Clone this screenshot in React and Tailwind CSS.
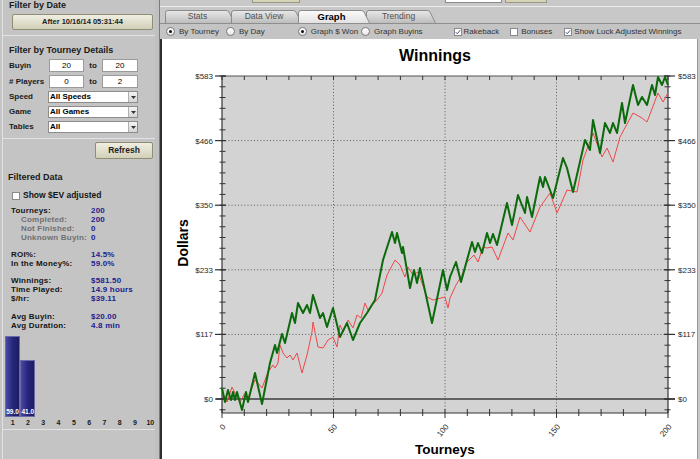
import React from "react";

const SF = "'Liberation Sans', Arial, sans-serif";

const green = [[222,388],[225,402],[228,390],[231,400],[233,392],[235,400],[237,392],[242,410],[246,392],[248,402],[255,373],[262,404],[270,363],[275,345],[277,353],[282,334],[285,343],[292,313],[295,323],[298,303],[303,313],[307,305],[310,313],[313,295],[320,318],[323,313],[327,327],[333,308],[340,337],[347,323],[353,340],[360,323],[367,313],[375,300],[383,260],[392,232],[395,243],[397,233],[402,253],[403,247],[410,288],[414,270],[417,283],[420,268],[432,323],[443,270],[447,290],[450,277],[456,262],[461,282],[467,260],[472,242],[475,252],[478,243],[482,253],[487,233],[490,243],[493,234],[497,245],[507,203],[512,225],[518,195],[525,213],[527,197],[532,217],[540,177],[543,187],[545,177],[553,198],[563,158],[567,168],[573,192],[585,140],[590,150],[593,120],[600,153],[605,123],[610,133],[613,123],[617,133],[622,103],[625,123],[633,85],[638,105],[642,97],[647,105],[652,85],[655,95],[658,77],[662,85],[665,77],[668,85]];

const red = [[222,392],[227,402],[232,387],[235,393],[240,402],[245,393],[248,398],[255,380],[258,383],[262,388],[268,372],[273,365],[275,368],[278,363],[280,345],[283,353],[287,358],[290,355],[293,360],[297,353],[302,373],[307,355],[312,332],[313,322],[318,347],[323,348],[328,340],[333,337],[337,347],[340,325],[343,332],[348,320],[353,328],[357,315],[361,318],[365,303],[368,310],[372,305],[377,300],[382,293],[387,275],[395,260],[400,265],[405,277],[408,267],[413,275],[418,272],[427,297],[433,300],[445,297],[448,308],[450,298],[456,285],[462,275],[467,262],[474,255],[478,262],[483,247],[487,248],[492,247],[498,260],[508,233],[513,240],[520,217],[530,232],[540,207],[550,193],[557,213],[567,190],[577,192],[583,160],[593,133],[602,157],[607,148],[613,162],[620,137],[633,113],[642,118],[647,122],[658,93],[663,102],[668,93]];

const pts = (a) => a.map((p) => p.join(",")).join(" ");

const majorsY = [76, 140.6, 205.2, 269.8, 334.4, 399];
const yLabels = ["$583", "$466", "$350", "$233", "$117", "$0"];
const minorY = [];
for (let i = 0; i < 32; i++) minorY.push(76 + i * 10.767);
const xTicks = [];
for (let i = 0; i <= 20; i++) xTicks.push(222 + i * 22.3);
const xLabels = [
  [222, "0"],
  [333.5, "50"],
  [445, "100"],
  [556.5, "150"],
  [668, "200"],
];

function Chart() {
  return (
    <svg width="535" height="420" viewBox="162 39 535 420" className="block shrink-0">
      <text x="435" y="61" textAnchor="middle" fontFamily={SF} fontWeight="700" fontSize="16" fill="#000">
        Winnings
      </text>
      <rect x="222" y="76" width="446" height="337" fill="#d3d3d3" />
      {majorsY.slice(1, 5).map((y) => (
        <line key={"g" + y} x1="222" x2="668" y1={y} y2={y} stroke="#5a5a5a" strokeWidth="1" strokeDasharray="1 2.2" />
      ))}
      {[333.5, 445, 556.5].map((x) => (
        <line key={"v" + x} x1={x} x2={x} y1="76" y2="413" stroke="#5a5a5a" strokeWidth="1" strokeDasharray="1 2.2" />
      ))}
      <line x1="216" x2="675" y1="399" y2="399" stroke="#3c3c3c" strokeWidth="1.4" />
      <line x1="222" x2="668" y1="76" y2="76" stroke="#555" strokeWidth="1.2" />
      <line x1="222" x2="668" y1="413" y2="413" stroke="#333" strokeWidth="1.2" />
      <line x1="222" x2="222" y1="76" y2="413" stroke="#333" strokeWidth="1.2" />
      <line x1="668" x2="668" y1="76" y2="413" stroke="#333" strokeWidth="1.2" />
      {minorY.map((y, i) => (
        <g key={"m" + i}>
          <line x1="219.5" x2="225.5" y1={y} y2={y} stroke="#333" strokeWidth="1" />
          <line x1="664.5" x2="670.5" y1={y} y2={y} stroke="#333" strokeWidth="1" />
        </g>
      ))}
      {majorsY.map((y, i) => (
        <g key={"M" + i}>
          <line x1="215" x2="226" y1={y} y2={y} stroke="#333" strokeWidth="1.2" />
          <line x1="664" x2="675" y1={y} y2={y} stroke="#333" strokeWidth="1.2" />
          <text x="213" y={y + 3} textAnchor="end" fontFamily={SF} fontSize="8" fill="#2a2a2a">
            {yLabels[i]}
          </text>
          <text x="678" y={y + 3} textAnchor="start" fontFamily={SF} fontSize="8" fill="#2a2a2a">
            {yLabels[i]}
          </text>
        </g>
      ))}
      {xTicks.map((x, i) => (
        <g key={"x" + i}>
          <line x1={x} x2={x} y1="76" y2="80" stroke="#333" strokeWidth="1" />
          <line x1={x} x2={x} y1="409" y2={i % 5 === 0 ? 418 : 416} stroke="#333" strokeWidth="1" />
        </g>
      ))}
      {xLabels.map(([x, t]) => (
        <text
          key={"xl" + t}
          x={x + 4}
          y="427"
          textAnchor="end"
          transform={`rotate(-50 ${x + 4} 427)`}
          fontFamily={SF}
          fontSize="8"
          fill="#2a2a2a"
        >
          {t}
        </text>
      ))}
      <polyline points={pts(red)} fill="none" stroke="#f04848" strokeWidth="1" strokeLinejoin="round" />
      <polyline points={pts(green)} fill="none" stroke="#0b6a0b" strokeWidth="2" strokeLinejoin="round" />
      <text x="188" y="243" textAnchor="middle" transform="rotate(-90 188 243)" fontFamily={SF} fontWeight="700" fontSize="14" fill="#000">
        Dollars
      </text>
      <text x="445" y="454" textAnchor="middle" fontFamily={SF} fontWeight="700" fontSize="13.5" fill="#000">
        Tourneys
      </text>
    </svg>
  );
}

function Tab({ label, active, w, className }) {
  const d = `M0.5,13 L0.5,3 Q0.5,0.5 3,0.5 L${w - 9},0.5 Q${w - 7},0.5 ${w - 6},2 L${w - 0.5},13`;
  const id = "tg" + label.replace(/\s/g, "");
  return (
    <div className={`relative h-[13px] shrink-0 flex items-center justify-center pr-[5px] ${className}`}>
      <svg className="absolute inset-0" width={w} height="13">
        <defs>
          <linearGradient id={id} x1="0" y1="0" x2="0" y2="1">
            <stop offset="0" stopColor={active ? "#fbfbfb" : "#e9e9e9"} />
            <stop offset="1" stopColor={active ? "#e2e2e2" : "#bdbdbd"} />
          </linearGradient>
        </defs>
        <path d={d} fill={`url(#${id})`} stroke="#8a8a8a" strokeWidth="1" />
      </svg>
      <span
        className={`relative leading-[13px] ${
          active ? "text-[9.5px] font-bold text-black" : "text-[8.5px] text-[#505050]"
        }`}
      >
        {label}
      </span>
    </div>
  );
}

function Radio({ on }) {
  return (
    <span className="w-[9px] h-[9px] rounded-full border border-[#7c7c7c] bg-linear-to-b from-[#ffffff] to-[#e6e6e6] flex items-center justify-center shrink-0">
      {on && <span className="w-[3px] h-[3px] rounded-full bg-[#111]" />}
    </span>
  );
}

function Check({ on }) {
  return (
    <span className="w-[8px] h-[8px] border border-[#8a8a8a] bg-white flex items-center justify-center shrink-0">
      {on && (
        <svg width="6" height="6" viewBox="0 0 6 6">
          <path d="M0.8 3.2 L2.3 4.8 L5.2 1.2" fill="none" stroke="#46558a" strokeWidth="1" />
        </svg>
      )}
    </span>
  );
}

function Row({ l, v, sub }) {
  return (
    <div className="flex h-[9px] leading-[9px] text-[8px] font-bold tracking-[0.2px] whitespace-nowrap">
      <div className={`w-[80px] shrink-0 ${sub ? "pl-[10px] text-[#707070]" : "text-[#151515]"}`}>{l}</div>
      <div className="text-[#21218f]">{v}</div>
    </div>
  );
}

function Select({ label, value }) {
  return (
    <div className="flex items-center h-[12px]">
      <div className="w-[45px] pl-[6px] text-[8px] font-bold text-[#1a1a1a] leading-[12px]">{label}</div>
      <div className="w-[90px] h-[12px] bg-white border border-[#8c8c8c] flex items-center">
        <span className="flex-1 pl-[1px] text-[8px] font-bold text-black leading-[10px]">{value}</span>
        <span className="w-[9px] h-[10px] bg-linear-to-b from-[#f4f4f4] to-[#d6d6d6] border-l border-[#b0b0b0] flex items-center justify-center">
          <svg width="5" height="3" viewBox="0 0 5 3">
            <path d="M0 0 L5 0 L2.5 3 Z" fill="#333" />
          </svg>
        </span>
      </div>
    </div>
  );
}

function InputRow({ label, a, b }) {
  return (
    <div className="flex items-center h-[13px]">
      <div className="w-[46px] pl-[6px] text-[8px] font-bold text-[#1a1a1a] leading-[13px] whitespace-nowrap">{label}</div>
      <div className="w-[35px] h-[13px] bg-white border border-[#9a9a9a] text-[8px] text-black text-center leading-[11px]">{a}</div>
      <div className="w-[18px] text-center text-[8px] font-bold text-[#1a1a1a]">to</div>
      <div className="w-[36px] h-[13px] bg-white border border-[#9a9a9a] text-[8px] text-black text-center leading-[11px]">{b}</div>
    </div>
  );
}

const nums = ["1", "2", "3", "4", "5", "6", "7", "8", "9", "10"];

export default function App() {
  return (
    <div className="w-[700px] h-[459px] overflow-hidden flex bg-[#c4c4c4] font-['Liberation_Sans',Arial,sans-serif]">
      {/* Left panel */}
      <div className="w-[155px] shrink-0 h-full bg-[#c4c4c4] pl-[2px] flex flex-col">
        <div className="border-l border-[#e2e2e2] flex flex-col h-full">
          <div className="h-[36px] border-b border-[#e2e2e2] flex flex-col shrink-0">
            <div className="h-[10px] leading-[10px] pl-[6px] text-[9px] font-bold text-[#1a1a1a]">Filter by Date</div>
            <div className="mt-[4px] ml-[9px] w-[141px] h-[16px] rounded-[2px] border border-[#8f8d74] bg-linear-to-b from-[#efeee2] to-[#d2d0b8] flex items-center justify-center text-[7.5px] font-bold text-[#222]">
              After 10/16/14 05:31:44
            </div>
          </div>

          <div className="mt-[9px] h-[94px] border-b border-[#e2e2e2] flex flex-col shrink-0">
            <div className="h-[10px] leading-[10px] pl-[6px] text-[9px] font-bold text-[#1a1a1a]">Filter by Tourney Details</div>
            <div className="mt-[4px]">
              <InputRow label="Buyin" a="20" b="20" />
            </div>
            <div className="mt-[3px]">
              <InputRow label="# Players" a="0" b="2" />
            </div>
            <div className="mt-[3px]">
              <Select label="Speed" value="All Speeds" />
            </div>
            <div className="mt-[3px]">
              <Select label="Game" value="All Games" />
            </div>
            <div className="mt-[3px]">
              <Select label="Tables" value="All" />
            </div>
          </div>

          <div className="mt-[3px] ml-[92px] w-[58px] h-[17px] rounded-[2px] border border-[#8f8d74] bg-linear-to-b from-[#efeee2] to-[#d2d0b8] flex items-center justify-center text-[8.5px] font-bold text-[#222] shrink-0">
            Refresh
          </div>

          <div className="mt-[13px] h-[10px] leading-[10px] pl-[5px] text-[9px] font-bold text-[#1a1a1a] shrink-0">Filtered Data</div>

          <div className="mt-[9px] h-[9px] flex items-center pl-[9px] gap-[3px] shrink-0">
            <span className="w-[8px] h-[8px] bg-white border border-[#8a8a8a]" />
            <span className="text-[8.5px] font-bold text-[#151515] leading-[9px]">Show $EV adjusted</span>
          </div>

          <div className="mt-[6px] pl-[8px] flex flex-col shrink-0">
            <Row l="Tourneys:" v="200" />
            <Row l="Completed:" v="200" sub />
            <Row l="Not Finished:" v="0" sub />
            <Row l="Unknown Buyin:" v="0" sub />
            <div className="h-[8px]" />
            <Row l="ROI%:" v="14.5%" />
            <Row l="In the Money%:" v="59.0%" />
            <div className="h-[8px]" />
            <Row l="Winnings:" v="$581.50" />
            <Row l="Time Played:" v="14.9 hours" />
            <Row l="$/hr:" v="$39.11" />
            <div className="h-[9px]" />
            <Row l="Avg Buyin:" v="$20.00" />
            <Row l="Avg Duration:" v="4.8 min" />
          </div>

          <div className="mt-[6px] ml-[2px] w-[153px] h-[81px] grid grid-cols-10 items-end shrink-0">
            <div className="h-[81px] w-[15px] border border-[#6a6aa8] bg-linear-to-r from-[#4848a6] via-[#27277c] to-[#1c1c62] flex items-end justify-center">
              <span className="text-[6.5px] leading-[8px] text-white font-bold">59.0</span>
            </div>
            <div className="h-[57px] w-[15px] border border-[#6a6aa8] bg-linear-to-r from-[#4848a6] via-[#27277c] to-[#1c1c62] flex items-end justify-center">
              <span className="text-[6.5px] leading-[8px] text-white font-bold">41.0</span>
            </div>
          </div>
          <div className="mt-[2px] ml-[2px] w-[153px] h-[8px] grid grid-cols-10 shrink-0">
            {nums.map((n) => (
              <div key={n} className="text-center text-[7px] leading-[8px] font-bold text-[#1a1a1a]">
                {n}
              </div>
            ))}
          </div>
          <div className="h-[3px] border-b border-[#e2e2e2] shrink-0" />
        </div>
      </div>

      {/* splitter */}
      <div className="w-[5px] shrink-0 h-full bg-[#c0c0c0] border-r border-[#7a7a7a]" />

      {/* Right area */}
      <div className="flex-1 min-w-0 flex flex-col">
        <div className="h-[10px] bg-[#c8c8c8] flex flex-col shrink-0">
          <div className="h-[3px] flex">
            <div className="ml-[92px] w-[48px] bg-[#d6d3b8] border-x border-b border-[#9a987e]" />
            <div className="ml-[145px] w-[57px] bg-white border-x border-b border-[#8a8a8a]" />
            <div className="ml-[3px] w-[42px] bg-[#d6d3b8] border-x border-b border-[#9a987e]" />
          </div>
          <div className="mt-[3px] h-[1px] bg-[#ececec]" />
        </div>

        <div className="h-[13px] bg-[#c8c8c8] flex items-end pl-[5px] shrink-0">
          <Tab label="Stats" w={70} className="w-[70px]" />
          <Tab label="Data View" w={71} className="w-[71px] -ml-[4px]" />
          <Tab label="Graph" active w={72} className="w-[72px] -ml-[4px] z-10" />
          <Tab label="Trending" w={70} className="w-[70px] -ml-[4px]" />
        </div>

        <div className="h-[16px] bg-[#c4c4c4] border-t border-[#8e8e8e] flex items-center pl-[6px] text-[8px] text-[#333] whitespace-nowrap shrink-0">
          <div className="flex items-center gap-[4px]">
            <Radio on />
            <span>By Tourney</span>
          </div>
          <div className="ml-[7px] flex items-center gap-[4px]">
            <Radio />
            <span>By Day</span>
          </div>
          <div className="ml-[33px] flex items-center gap-[4px]">
            <Radio on />
            <span>Graph $ Won</span>
          </div>
          <div className="ml-[3px] flex items-center gap-[4px]">
            <Radio />
            <span>Graph Buyins</span>
          </div>
          <div className="ml-[31px] flex items-center gap-[2px]">
            <Check on />
            <span>Rakeback</span>
          </div>
          <div className="ml-[11px] flex items-center gap-[3px]">
            <Check />
            <span>Bonuses</span>
          </div>
          <div className="ml-[12px] flex items-center gap-[2px]">
            <Check on />
            <span>Show Luck Adjusted Winnings</span>
          </div>
        </div>

        <div className="flex-1 flex bg-white border-l-2 border-[#2e2e2e] min-h-0">
          <Chart />
          <div className="flex-1 bg-[#c8c8c8] border-l border-[#9a9a9a]" />
        </div>
      </div>
    </div>
  );
}
